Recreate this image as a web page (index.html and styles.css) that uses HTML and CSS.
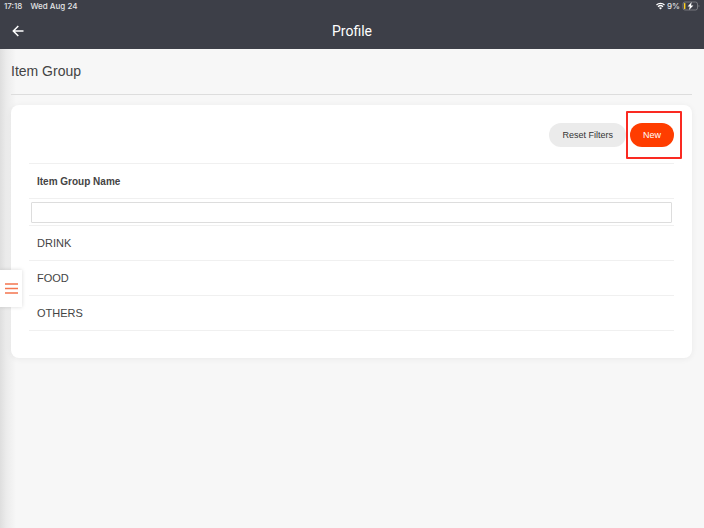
FILE: index.html
```html
<!DOCTYPE html>
<html lang="en">
<head>
  <meta charset="UTF-8">
  <meta name="viewport" content="width=device-width, initial-scale=1">
  <title>Profile - Item Group</title>
  <link rel="stylesheet" href="styles.css">
</head>
<body>
  <header>
    <div class="status-bar">
      <span>17:18</span>
      <span>Wed Aug 24</span>
      <div class="status-icons">
        <svg width="9" height="8" viewBox="0 0 18 15" fill="none" stroke="#fff" stroke-width="2.6">
          <path d="M1 5.5a11.5 11.5 0 0 1 16 0M4 9a7.2 7.2 0 0 1 10 0"/>
          <path d="M9 14.5L6 11.4a4.3 4.3 0 0 1 6 0z" fill="#fff" stroke="none"/>
        </svg>
        <span>9%</span>
        <svg width="18" height="10" viewBox="0 0 18 10">
          <rect x="1" y="1" width="14.5" height="8" rx="2" fill="none" stroke="#85878c" stroke-width="0.8"/>
          <rect x="2" y="2" width="1.4" height="6" rx="0.5" fill="#ffd21c"/>
          <path d="M16.6 3.8v2.4c1-.4 1-2 0-2.4z" fill="#85878c"/>
          <path d="M9.7 1L5.6 5.6h2.2L7 9l4.4-4.6H9z" fill="#fff"/>
        </svg>
      </div>
    </div>
    <div class="nav-bar">
      <button class="back" aria-label="Back">
        <svg width="12" height="12" viewBox="0 0 12 12" fill="none" stroke="#fff" stroke-width="1.5">
          <path d="M11.5 6H1.5M6.3 1L1.3 6l5 5"/>
        </svg>
      </button>
      <div class="nav-title">Profile</div>
    </div>
  </header>

  <main>
    <h1>Item Group</h1>

    <section class="card">
      <div class="actions">
        <button class="btn">Reset Filters</button>
        <div class="highlight">
          <button class="btn btn-new">New</button>
        </div>
      </div>

      <table>
        <thead>
          <tr><th scope="col" id="groupName">Item Group Name</th></tr>
          <tr><td class="filter"><input type="text" aria-labelledby="groupName"></td></tr>
        </thead>
        <tbody>
          <tr><td>DRINK</td></tr>
          <tr><td>FOOD</td></tr>
          <tr><td>OTHERS</td></tr>
        </tbody>
      </table>
    </section>

    <!-- side drawer handle -->
    <button class="drawer" aria-label="Open menu">
      <svg width="13" height="11" viewBox="0 0 13 11" fill="none" stroke="#f4764f" stroke-width="1.4">
        <path d="M0 1h13M0 5.5h13M0 10h13"/>
      </svg>
    </button>
  </main>
</body>
</html>
```

FILE: styles.css
```css
* {
  box-sizing: border-box;
}
body {
  margin: 0;
  min-height: 100vh;
  display: flex;
  flex-direction: column;
  font-family: "Liberation Sans", Arial, sans-serif;
  background: #f7f7f7;
  color: #444;
}
button {
  border: 0;
  padding: 0;
  font-family: inherit;
  cursor: pointer;
}
svg {
  display: block;
}

header {
  position: relative;
  background: #3d3f48;
  color: #fff;
  box-shadow: 0 1px 2px rgba(0,0,0,0.4);
}
.status-bar {
  display: flex;
  align-items: center;
  gap: 8px;
  height: 12px;
  padding: 0 4px;
  font: 500 8px "Inter", sans-serif;
  color: #e4e5e7;
}
.status-icons {
  display: flex;
  align-items: center;
  gap: 2px;
  margin-left: auto;
}
.nav-bar {
  display: grid;
  grid-template-columns: 12px 1fr 12px;
  align-items: center;
  height: 37px;
  padding: 0 12px;
}
.back {
  background: none;
}
.nav-title {
  text-align: center;
  font: 14px "Roboto", sans-serif;
}

main {
  position: relative;
  flex: 1;
  padding: 12px 12px 12px 11px;
  background: linear-gradient(to right, #dedede, #ebebeb 6px, #f7f7f7 16px);
}
h1 {
  margin: 0 0 10px;
  padding-bottom: 12px;
  border-bottom: 1px solid #ddd;
  font-size: 14px;
  line-height: 21px;
  font-weight: normal;
}
.card {
  padding: 18px;
  padding-bottom: 27px;
  background: #fff;
  border-radius: 8px;
  box-shadow: 0 1px 6px rgba(0,0,0,0.06);
}
.actions {
  display: flex;
  justify-content: flex-end;
  gap: 4px;
  margin-bottom: 16px;
}
.btn {
  height: 24px;
  padding: 0 13px;
  border-radius: 12px;
  background: #ebebeb;
  color: #333;
  font-size: 9px;
}
.btn-new {
  display: block;
  background: #ff3d00;
  color: #fff;
}
.highlight {
  position: relative;
}
.highlight::after {
  content: "";
  position: absolute;
  inset: -12px -8px -12px -4px;
  border: 2px solid #fa2a22;
  border-radius: 1px;
  pointer-events: none;
}

table {
  width: 100%;
  border-collapse: collapse;
  border-top: 1px solid #f0f0f0;
  font-size: 11px;
}
th, td {
  height: 35px;
  padding: 0 8px;
  border-bottom: 1px solid #f0f0f0;
  text-align: left;
}
th {
  font-size: 10px;
}
.filter {
  height: 27px;
  padding: 0 2px;
}
.filter input {
  display: block;
  width: 100%;
  height: 21px;
  border: 1px solid #ddd;
  border-radius: 1px;
  background: #fff;
}

.drawer {
  position: absolute;
  top: 221px;
  left: 0;
  display: flex;
  align-items: center;
  width: 22px;
  height: 37px;
  padding-left: 5px;
  background: #fff;
  box-shadow: 0 0 4px rgba(0,0,0,0.15);
}
```
